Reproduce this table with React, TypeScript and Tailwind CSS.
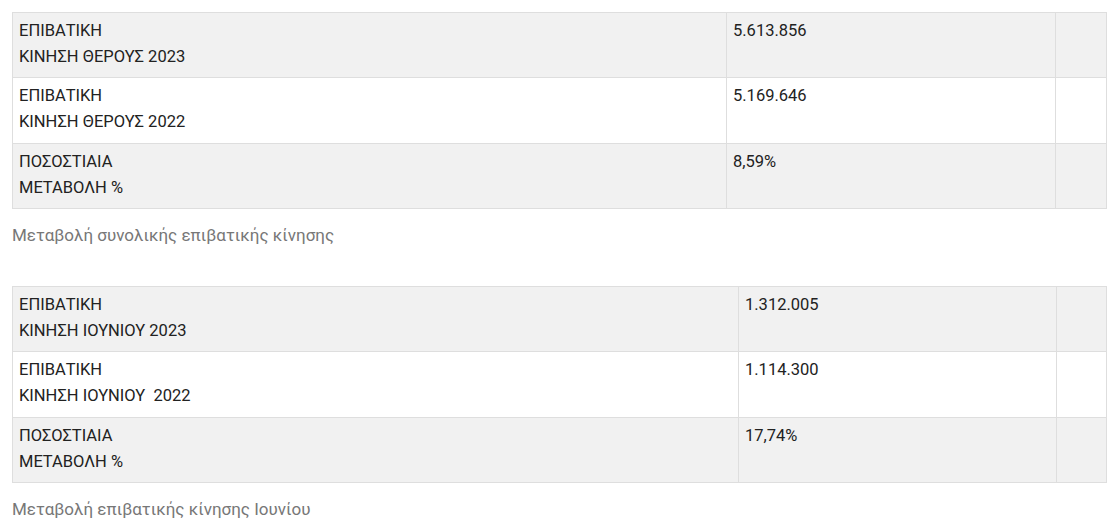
import React from 'react';

type Row = { label: [string, string]; value: string };

const summer: Row[] = [
  { label: ['ΕΠΙΒΑΤΙΚΗ', 'ΚΙΝΗΣΗ ΘΕΡΟΥΣ 2023'], value: '5.613.856' },
  { label: ['ΕΠΙΒΑΤΙΚΗ', 'ΚΙΝΗΣΗ ΘΕΡΟΥΣ 2022'], value: '5.169.646' },
  { label: ['ΠΟΣΟΣΤΙΑΙΑ', 'ΜΕΤΑΒΟΛΗ %'], value: '8,59%' },
];

const june: Row[] = [
  { label: ['ΕΠΙΒΑΤΙΚΗ', 'ΚΙΝΗΣΗ ΙΟΥΝΙΟΥ 2023'], value: '1.312.005' },
  { label: ['ΕΠΙΒΑΤΙΚΗ', 'ΚΙΝΗΣΗ ΙΟΥΝΙΟΥ\u00a0 2022'], value: '1.114.300' },
  { label: ['ΠΟΣΟΣΤΙΑΙΑ', 'ΜΕΤΑΒΟΛΗ %'], value: '17,74%' },
];

const StatsTable = ({ rows, firstCol, secondCol }: { rows: Row[]; firstCol: string; secondCol: string }) => (
  <table className="w-full border-collapse table-fixed">
    <colgroup>
      <col className={firstCol} />
      <col className={secondCol} />
      <col />
    </colgroup>
    <tbody>
      {rows.map((r, i) => {
        const cell =
          i === 1
            ? 'border border-[#dedede] px-[6px] pt-[5px] pb-[8px] align-top leading-[26px]'
            : 'border border-[#dedede] px-[6px] pt-[5px] pb-[7px] align-top leading-[26px]';
        return (
          <tr key={i} className={i % 2 === 0 ? 'bg-[#f1f1f1]' : 'bg-white'}>
            <td className={cell}>
              {r.label[0]}
              <br />
              {r.label[1]}
            </td>
            <td className={cell}>{r.value}</td>
            <td className="border border-[#dedede]"></td>
          </tr>
        );
      })}
    </tbody>
  </table>
);

export default function App() {
  return (
    <div
      className="bg-white px-[12px] pt-[12px] text-[16.5px] text-[#222]"
      style={{ fontFamily: 'Roboto, "Open Sans", sans-serif', width: 1119, height: 532 }}
    >
      <StatsTable rows={summer} firstCol="w-[714px]" secondCol="w-[329px]" />
      <p className="mt-[13px] text-[17px] leading-[26px] text-[#777]">Μεταβολή συνολικής επιβατικής κίνησης</p>
      <div className="mt-[38px]">
        <StatsTable rows={june} firstCol="w-[726px]" secondCol="w-[318px]" />
      </div>
      <p className="mt-[13px] text-[17px] leading-[26px] text-[#777]">Μεταβολή επιβατικής κίνησης Ιουνίου</p>
    </div>
  );
}
